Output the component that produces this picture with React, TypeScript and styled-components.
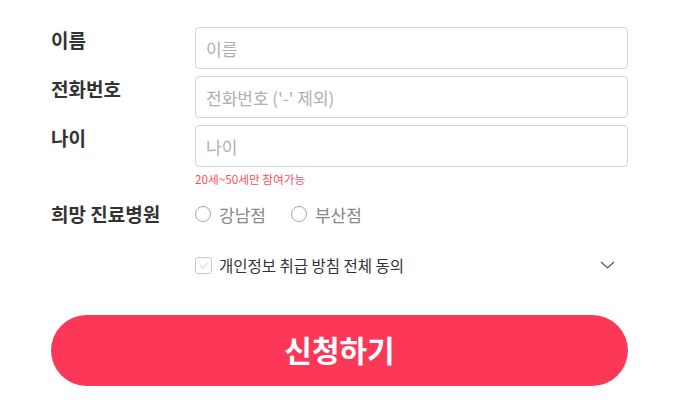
import styled, { createGlobalStyle } from "styled-components";

const GlobalStyle = createGlobalStyle`
	body {
		margin: 0;
		background: #fff;
		font-family: "Noto Sans CJK KR", "Noto Sans", sans-serif;
		color: #333;
	}
`;

export default function App() {
	return (
		<Page>
			<GlobalStyle />
			<Form onSubmit={(e) => e.preventDefault()}>
				<Fields>
					<Row>
						<Label>이름</Label>
						<TextInput type="text" placeholder="이름" />
					</Row>
					<Row>
						<Label>전화번호</Label>
						<TextInput type="text" placeholder="전화번호 ('-' 제외)" />
					</Row>
					<Row>
						<Label>나이</Label>
						<div>
							<TextInput type="text" placeholder="나이" />
							<Helper>20세~50세만 참여가능</Helper>
						</div>
					</Row>
				</Fields>

				<RadioRow>
					<Label $center>희망 진료병원</Label>
					<RadioGroup>
						<RadioItem>
							<RadioCircle type="radio" name="branch" />
							강남점
						</RadioItem>
						<RadioItem>
							<RadioCircle type="radio" name="branch" />
							부산점
						</RadioItem>
					</RadioGroup>
				</RadioRow>

				<AgreeRow>
					<span />
					<AgreeBox>
						<CheckLabel>
							<CheckBox>
								<svg width="10" height="8" viewBox="0 0 10 8">
									<path d="M1 4l2.8 2.8L9 1.2" fill="none" stroke="#e0e0e0" strokeWidth="1.3" />
								</svg>
							</CheckBox>
							개인정보 취급 방침 전체 동의
						</CheckLabel>
						<svg width="15" height="8" viewBox="0 0 15 8">
							<path d="M1 1l6.5 6L14 1" fill="none" stroke="#555" strokeWidth="1.2" />
						</svg>
					</AgreeBox>
				</AgreeRow>

				<SubmitButton type="submit">신청하기</SubmitButton>
			</Form>
		</Page>
	);
}

const Page = styled.div`
	width: 678px;
	height: 410px;
	overflow: hidden;
`;

const Form = styled.form`
	padding: 27px 50px 0 51px;
	display: flex;
	flex-direction: column;
`;

const Fields = styled.div`
	display: flex;
	flex-direction: column;
	gap: 7px;
`;

const Row = styled.div`
	display: grid;
	grid-template-columns: 144px 1fr;
	align-items: start;
`;

const Label = styled.label<{ $center?: boolean }>`
	font-size: 19px;
	font-weight: 700;
	line-height: 26px;
	color: #333;
	align-self: ${(p) => (p.$center ? "center" : "start")};
`;

const TextInput = styled.input`
	box-sizing: border-box;
	display: block;
	width: 100%;
	height: 42px;
	padding: 0 10px;
	border: 1px solid #d6d6d6;
	border-radius: 4px;
	font-family: inherit;
	font-size: 17px;
	color: #333;
	outline: none;
	&::placeholder {
		color: #b0b0b0;
	}
`;

const Helper = styled.p`
	margin: 4px 0 0;
	font-size: 11.7px;
	line-height: 16px;
	color: #ff4d5e;
`;

const RadioRow = styled(Row)`
	margin-top: 12px;
	align-items: center;
	height: 30px;
`;

const RadioGroup = styled.div`
	display: flex;
	align-items: center;
	gap: 25px;
`;

const RadioItem = styled.label`
	display: flex;
	align-items: center;
	gap: 8px;
	font-size: 17px;
	color: #888;
`;

const RadioCircle = styled.input`
	appearance: none;
	margin: 0;
	width: 16px;
	height: 16px;
	border: 1px solid #a8a8a8;
	border-radius: 50%;
	background: #fff;
`;

const AgreeRow = styled(Row)`
	margin-top: 25px;
	align-items: center;
`;

const AgreeBox = styled.div`
	display: flex;
	align-items: center;
	justify-content: space-between;
	padding-right: 13px;
`;

const CheckLabel = styled.label`
	display: flex;
	align-items: center;
	gap: 7px;
	font-size: 15.5px;
	color: #333;
`;

const CheckBox = styled.span`
	box-sizing: border-box;
	width: 17px;
	height: 17px;
	border: 1px solid #c8c8c8;
	border-radius: 3px;
	display: flex;
	align-items: center;
	justify-content: center;
`;

const SubmitButton = styled.button`
	margin-top: 39px;
	height: 71px;
	width: 577px;
	padding: 0 0 4px;
	border: none;
	border-radius: 36px;
	background: #fc3757;
	color: #fff;
	font-family: inherit;
	font-size: 30px;
	font-weight: 700;
	cursor: pointer;
`;
